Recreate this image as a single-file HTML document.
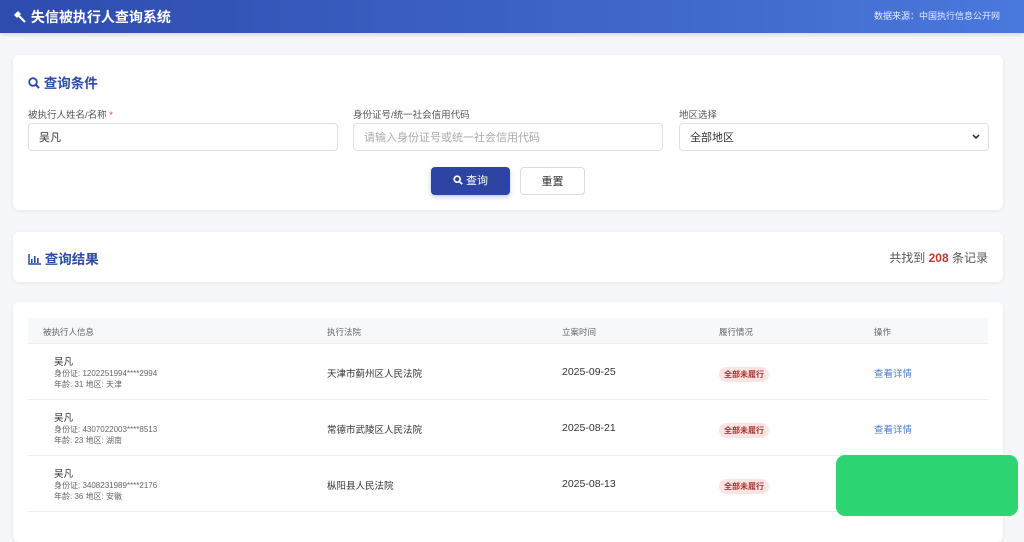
<!DOCTYPE html>
<html><head><meta charset="utf-8"><style>
*{box-sizing:border-box;margin:0;padding:0}
body{width:1024px;height:523px;overflow:hidden;background:#f5f7fa;font-family:"Liberation Sans","Noto Sans CJK SC",sans-serif;color:#333;position:relative}
.hd{position:absolute;left:0;top:0;width:1024px;height:33px;background:linear-gradient(90deg,#2e4bae,#4a78dc);color:#fff;box-shadow:0 2px 4px rgba(0,0,0,.12)}
.hd .t{position:absolute;left:13px;top:7px;font-size:14px;font-weight:bold}
.hd .s{position:absolute;right:24px;top:9px;font-size:9px;color:#e6ecff}
.card{position:absolute;left:13px;width:990px;background:#fff;border-radius:6px;box-shadow:0 1px 4px rgba(0,0,0,.07)}
.ttl{position:absolute;left:15px;font-size:13.5px;font-weight:bold;color:#2d4aa8}
.lbl{position:absolute;top:52px;font-size:9.5px;color:#555}
.inp{position:absolute;top:68px;width:310px;height:28px;border:1px solid #dde1e6;border-radius:4px;font-size:11px;padding:5px 10px}
.btn{position:absolute;top:112px;height:28px;border-radius:4px;font-size:11px;text-align:center;line-height:28px}
.th{position:absolute;left:15px;top:16px;width:960px;height:26px;background:#f7f8fa;border-bottom:1px solid #eceef1;font-size:8.5px;color:#666}
.th span,.row span{position:absolute}
.row{position:absolute;left:15px;width:960px;height:56px;border-bottom:1px solid #eceef1;font-size:9.5px}
.tag{background:#fbe3e3;color:#a33;border-radius:8px;font-size:8px;padding:2px 5px;font-weight:bold}
.sub{font-size:8px;color:#666;line-height:11px}
</style></head><body>
<div class="hd"><div class="t"><svg width="14" height="13" viewBox="0 0 14 13" style="vertical-align:-1px"><path d="M1 5l4-4 3 3-4 4z" fill="#fff"/><path d="M6 6l6 6" stroke="#fff" stroke-width="2.2"/></svg> 失信被执行人查询系统</div><div class="s">数据来源：中国执行信息公开网</div></div>
<div class="card" style="top:55px;height:155px">
<div class="ttl" style="top:17px"><svg width="12" height="12" viewBox="0 0 12 12" style="vertical-align:-1px"><circle cx="5" cy="5" r="3.8" fill="none" stroke="#2d4aa8" stroke-width="1.8"/><path d="M8 8l3 3" stroke="#2d4aa8" stroke-width="2"/></svg> 查询条件</div>
<div class="lbl" style="left:15px">被执行人姓名/名称 <span style="color:#d44">*</span></div>
<div class="lbl" style="left:340px">身份证号/统一社会信用代码</div>
<div class="lbl" style="left:666px">地区选择</div>
<div class="inp" style="left:15px">吴凡</div>
<div class="inp" style="left:340px;color:#aaa">请输入身份证号或统一社会信用代码</div>
<div class="inp" style="left:666px">全部地区<svg width="8" height="6" viewBox="0 0 8 6" style="position:absolute;right:8px;top:10px"><path d="M1 1l3 3 3-3" fill="none" stroke="#333" stroke-width="1.6"/></svg></div>
<div class="btn" style="left:418px;width:79px;background:#2d44a4;color:#fff;box-shadow:0 2px 4px rgba(45,68,164,.3)"><svg width="10" height="10" viewBox="0 0 12 12" style="vertical-align:-1px"><circle cx="5" cy="5" r="3.6" fill="none" stroke="#fff" stroke-width="2"/><path d="M8 8l3 3" stroke="#fff" stroke-width="2"/></svg> 查询</div>
<div class="btn" style="left:507px;width:65px;border:1px solid #d8dce2;background:#fff">重置</div>
</div>
<div class="card" style="top:232px;height:50px">
<div class="ttl" style="top:16px"><svg width="13" height="11" viewBox="0 0 13 11" style="vertical-align:-1px"><path d="M1 0v10h12" fill="none" stroke="#2d4aa8" stroke-width="1.5"/><rect x="3" y="5" width="1.6" height="4" fill="#2d4aa8"/><rect x="6" y="2" width="1.6" height="7" fill="#2d4aa8"/><rect x="9" y="4" width="1.6" height="5" fill="#2d4aa8"/></svg> 查询结果</div>
<div style="position:absolute;right:15px;top:17px;font-size:12px;color:#555">共找到 <b style="color:#c0392b">208</b> 条记录</div>
</div>
<div class="card" style="top:302px;height:240px">
<div class="th"><span style="left:15px;top:8px">被执行人信息</span><span style="left:299px;top:8px">执行法院</span><span style="left:534px;top:8px">立案时间</span><span style="left:691px;top:8px">履行情况</span><span style="left:846px;top:8px">操作</span></div>
<div class="row" style="top:42px"><span style="left:26px;top:10px">吴凡<div class="sub">身份证: 1202251994****2994<br>年龄: 31 地区: 天津</div></span><span style="left:299px;top:22px">天津市蓟州区人民法院</span><span style="left:534px;top:21px;font-size:10.5px;line-height:14px">2025-09-25</span><span class="tag" style="left:691px;top:23px">全部未履行</span><span style="left:846px;top:22px;color:#4a78d0">查看详情</span></div>
<div class="row" style="top:98px"><span style="left:26px;top:10px">吴凡<div class="sub">身份证: 4307022003****8513<br>年龄: 23 地区: 湖南</div></span><span style="left:299px;top:22px">常德市武陵区人民法院</span><span style="left:534px;top:21px;font-size:10.5px;line-height:14px">2025-08-21</span><span class="tag" style="left:691px;top:23px">全部未履行</span><span style="left:846px;top:22px;color:#4a78d0">查看详情</span></div>
<div class="row" style="top:154px"><span style="left:26px;top:10px">吴凡<div class="sub">身份证: 3408231989****2176<br>年龄: 36 地区: 安徽</div></span><span style="left:299px;top:22px">枞阳县人民法院</span><span style="left:534px;top:21px;font-size:10.5px;line-height:14px">2025-08-13</span><span class="tag" style="left:691px;top:23px">全部未履行</span></div>
</div>
<div style="position:absolute;left:836px;top:455px;width:182px;height:61px;background:#2ed573;border-radius:9px"></div>
</body></html>
